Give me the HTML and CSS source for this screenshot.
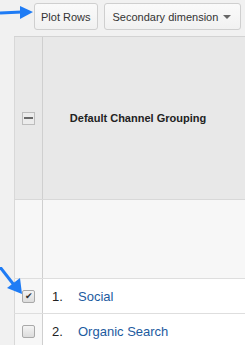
FILE: index.html
```html
<!DOCTYPE html>
<html lang="en">
<head>
  <meta charset="UTF-8" />
  <title>Channel report</title>
  <link rel="stylesheet" href="styles.css">
</head>
<body>
  <div class="toolbar">
    <button class="btn">Plot Rows</button>
    <button class="btn dim-btn">Secondary dimension <span class="caret"></span></button>
  </div>

  <div class="report">
    <div class="row head-row">
      <div class="check-cell"><span class="collapse-box"></span></div>
      <div class="main-cell head-label">Default Channel Grouping</div>
    </div>
    <div class="row blank-row">
      <div class="check-cell"></div>
      <div class="main-cell"></div>
    </div>
    <div class="row data-row">
      <div class="check-cell"><span class="box checked">&#10004;</span></div>
      <div class="main-cell"><span class="num">1.</span><a class="link">Social</a></div>
    </div>
    <div class="row data-row">
      <div class="check-cell"><span class="box"></span></div>
      <div class="main-cell"><span class="num">2.</span><a class="link">Organic Search</a></div>
    </div>
  </div>

  <svg class="arrow arrow-top" width="34" height="14" viewBox="0 0 34 14">
    <path d="M0 7 L22 6" stroke="#1f7cf5" stroke-width="3" fill="none"/>
    <path d="M20 0 L33 6 L20 13 Z" fill="#1f7cf5"/>
  </svg>
  <svg class="arrow arrow-low" width="26" height="30" viewBox="0 0 26 30">
    <path d="M0 0 L14 18" stroke="#1f7cf5" stroke-width="3" fill="none"/>
    <path d="M7 21 L22 27 L20 11 Z" fill="#1f7cf5"/>
  </svg>
</body>
</html>
```

FILE: styles.css
```css
body {
  margin: 0;
  background-color: #f1f1f1;
  font-family: Arial, "Liberation Sans", sans-serif;
  overflow: hidden;
  position: relative;
  width: 245px;
  height: 345px;
}

.toolbar {
  display: flex;
  gap: 6px;
  padding: 3px 0 0 34px;
  height: 33px;
  box-sizing: border-box;
}

.btn {
  height: 27px;
  padding: 0 6px;
  border: 1px solid #cfcfcf;
  border-radius: 3px;
  background: linear-gradient(#fafafa, #f1f1f1);
  color: #333;
  font-family: Arial, "Liberation Sans", sans-serif;
  font-size: 11px;
  white-space: nowrap;
}

.dim-btn {
  width: 137px;
  display: flex;
  align-items: center;
  justify-content: space-between;
  padding: 0 9px 0 8px;
}

.caret {
  width: 0;
  height: 0;
  border-left: 4px solid transparent;
  border-right: 4px solid transparent;
  border-top: 4px solid #666;
}

.report {
  margin: 3px 0 0 14px;
  border-top: 1px solid #d3d3d3;
}

.row {
  display: flex;
}

.check-cell {
  width: 27px;
  border-right: 1px solid #cfcfcf;
  border-left: 1px solid #d8d8d8;
  display: flex;
  align-items: center;
  justify-content: center;
}

.main-cell {
  flex: 1;
  display: flex;
  align-items: center;
}

.head-row {
  height: 162px;
  background-color: #e8e8e8;
  border-bottom: 1px solid #d8d8d8;
}

.collapse-box {
  width: 11px;
  height: 11px;
  border: 1px solid #bdbdbd;
  background-color: #ececec;
  display: flex;
  align-items: center;
  justify-content: center;
}

.collapse-box::after {
  content: "";
  width: 9px;
  height: 2px;
  background-color: #6a6a6a;
}

.head-label {
  justify-content: center;
  padding-right: 12px;
  font-size: 11px;
  font-weight: bold;
  color: #222;
}

.blank-row {
  height: 78px;
  background-color: #f7f7f7;
  border-bottom: 1px solid #dedede;
}

.data-row {
  height: 34px;
  background-color: #fff;
  border-bottom: 1px solid #dedede;
}

.data-row .check-cell {
  background-color: #f7f7f7;
}

.box {
  width: 11px;
  height: 11px;
  border: 1px solid #a9a9a9;
  border-radius: 2px;
  background: linear-gradient(#f4f4f4, #dcdcdc);
  font-size: 9px;
  line-height: 11px;
  text-align: center;
  color: #333;
}

.num {
  width: 26px;
  padding-left: 9px;
  font-size: 13px;
  color: #222;
}

.link {
  font-size: 13px;
  color: #1d5ba0;
}

.arrow {
  position: absolute;
}

.arrow-top {
  left: 0;
  top: 6px;
}

.arrow-low {
  left: 0;
  top: 267px;
}
```
